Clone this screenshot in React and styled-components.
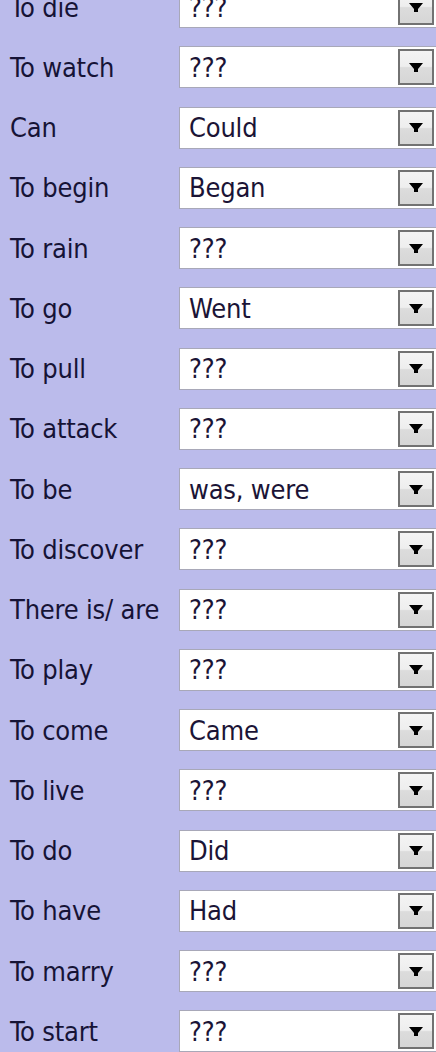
import React from 'react'
import styled, { createGlobalStyle } from 'styled-components'

const verbs = [
  ['To die', '???'],
  ['To watch', '???'],
  ['Can', 'Could'],
  ['To begin', 'Began'],
  ['To rain', '???'],
  ['To go', 'Went'],
  ['To pull', '???'],
  ['To attack', '???'],
  ['To be', 'was, were'],
  ['To discover', '???'],
  ['There is/ are', '???'],
  ['To play', '???'],
  ['To come', 'Came'],
  ['To live', '???'],
  ['To do', 'Did'],
  ['To have', 'Had'],
  ['To marry', '???'],
  ['To start', '???'],
]

const Global = createGlobalStyle`
  html, body {
    margin: 0;
    padding: 0;
    background: #bbbbeb;
    overflow: hidden;
  }
`

const Page = styled.div`
  width: 436px;
  height: 1052px;
  overflow: hidden;
  background: #bbbbeb;
  font-family: "DejaVu Sans Condensed", "DejaVu Sans", sans-serif;
  color: #161336;
`

const List = styled.div`
  display: flex;
  flex-direction: column;
  margin-top: -23px;
`

const Row = styled.div`
  display: grid;
  grid-template-columns: 179px 257px;
  align-items: center;
  height: 60.25px;
`

const Label = styled.div`
  padding-left: 10px;
  font-size: 27px;
  letter-spacing: -0.2px;
  white-space: nowrap;
`

const Select = styled.div`
  box-sizing: border-box;
  height: 42px;
  display: flex;
  align-items: stretch;
  background: #fff;
  border: 1px solid #a8a8b8;
  border-right: none;
  padding: 2px 2px 2px 0;
`

const Value = styled.div`
  flex: 1;
  display: flex;
  align-items: center;
  padding-left: 9px;
  font-size: 27px;
  letter-spacing: -0.2px;
  color: #1b1436;
`

const Button = styled.div`
  box-sizing: border-box;
  width: 36px;
  display: flex;
  align-items: center;
  justify-content: center;
  border: 2px solid #727272;
  background: linear-gradient(#f4f4f4 0%, #eeeeee 48%, #dcdcdc 52%, #d6d6d6 100%);
`

function Arrow() {
  return (
    <svg width="14" height="9" viewBox="0 0 14 9">
      <polygon points="0,0 14,0 9,6 9,9 5,9 5,6" fill="#000" />
    </svg>
  )
}

export default function App() {
  return (
    <Page>
      <Global />
      <List>
        {verbs.map(([verb, past]) => (
          <Row key={verb}>
            <Label>{verb}</Label>
            <Select>
              <Value>{past}</Value>
              <Button>
                <Arrow />
              </Button>
            </Select>
          </Row>
        ))}
      </List>
    </Page>
  )
}
